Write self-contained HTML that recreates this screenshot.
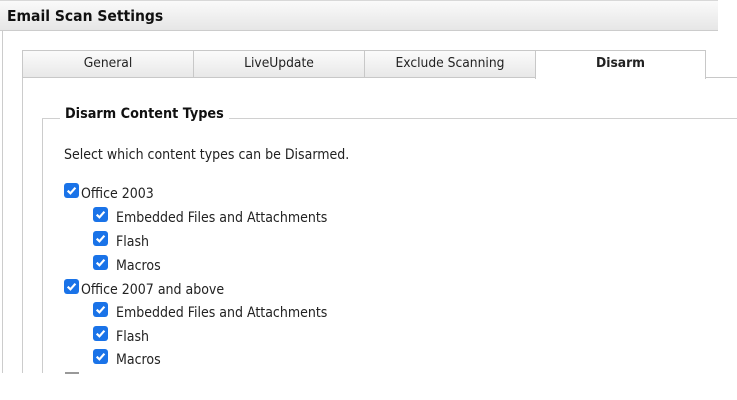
<!DOCTYPE html><html><head><style>
body{margin:0;width:737px;height:400px;background:#fff;position:relative;overflow:hidden;font-family:"DejaVu Sans Condensed","DejaVu Sans","Liberation Sans",sans-serif;font-size:12px;color:#222}
.a{position:absolute}
.title{left:0;top:0;width:718px;height:31px;background:linear-gradient(#fafafa,#e6e6e6);border-top:1px solid #d8d8d8;border-bottom:1px solid #ccc;box-sizing:border-box}
.title span{position:absolute;left:7px;top:6px;font-weight:bold;font-size:15.5px;color:#111}
.tab{top:50px;height:28px;box-sizing:border-box;border:1px solid #c8c8c8;border-right:none;background:linear-gradient(#fbfbfb,#e8e8e8);text-align:center;line-height:24px;font-size:13.7px}
.cb{position:absolute;width:15px;height:15px;background:#1a73e8;border-radius:3px}
.cb svg{position:absolute;left:1px;top:1px}
.lbl{position:absolute;font-size:14px}
</style></head><body>
<div class="a title"><span>Email Scan Settings</span></div>
<div class="a" style="left:2px;top:31px;width:1px;height:342px;background:#ccc"></div>
<div class="a" style="left:22px;top:78px;width:1px;height:295px;background:#ccc"></div>
<div class="a" style="left:42px;top:118px;width:1px;height:255px;background:#ccc"></div>
<div class="a tab" style="left:22px;width:171px">General</div>
<div class="a tab" style="left:193px;width:171px">LiveUpdate</div>
<div class="a tab" style="left:364px;width:171px">Exclude Scanning</div>
<div class="a tab" style="left:535px;width:171px;background:#fff;border-right:1px solid #c8c8c8;border-bottom:none;font-weight:bold;height:29px">Disarm</div>
<div class="a" style="left:22px;top:77px;width:513px;height:1px;background:#c8c8c8"></div>
<div class="a" style="left:706px;top:77px;width:31px;height:1px;background:#c8c8c8"></div>
<div class="a" style="left:42px;top:118px;width:695px;height:1px;background:#d0d0d0"></div>
<div class="a" style="left:60px;top:106px;background:#fff;padding:0 5px;font-weight:bold;font-size:14.3px;color:#111">Disarm Content Types</div>
<div class="lbl" style="left:64px;top:147px">Select which content types can be Disarmed.</div>
<div id="c"></div>
<script>
var items=[[64,183,"Office 2003"],[93,207,"Embedded Files and Attachments"],[93,231,"Flash"],[93,255,"Macros"],[64,279,"Office 2007 and above"],[93,302,"Embedded Files and Attachments"],[93,326,"Flash"],[93,349,"Macros"]];
var h="";items.forEach(function(i){h+='<div class="cb" style="left:'+i[0]+'px;top:'+i[1]+'px"><svg width="13" height="13" viewBox="0 0 12 12"><path d="M2.5 6.2 L5 8.6 L9.6 3.4" stroke="#fff" stroke-width="2" fill="none"/></svg></div><div class="lbl" style="left:'+(i[0]+(i[0]==64?17:23))+'px;top:'+(i[1]+3)+'px">'+i[2]+'</div>';});
document.getElementById("c").innerHTML=h;
</script>
<div class="a" style="left:65px;top:372px;width:14px;height:2px;background:#999"></div>
</body></html>
